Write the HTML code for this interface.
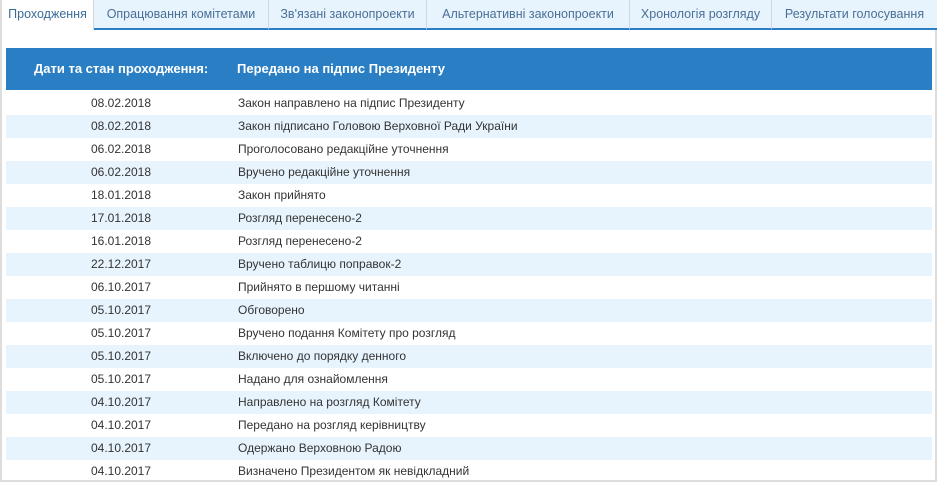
<!DOCTYPE html>
<html><head><meta charset="utf-8"><style>
*{margin:0;padding:0;box-sizing:border-box}
body{width:939px;height:489px;background:#fff;font-family:"Liberation Sans",Arial,sans-serif;position:relative;overflow:hidden}
.frame{position:absolute;left:0;top:0;width:937px;height:482px;border-left:2px solid #ddd;border-right:2px solid #ddd;border-bottom:2px solid #ddd}
.tabs{position:absolute;left:0;top:0;height:30px;width:937px}
.tab{position:absolute;top:0;height:30px;background:#e8f4fd;border-right:1px solid #d0d7de;border-bottom:2px solid #2a7fc4;color:#4a6f97;font-size:12.5px;text-align:center;line-height:28px}
.tab.act{background:#fff;border-bottom:none;color:#3a6d9a}
.hdr{position:absolute;left:6px;top:48px;width:926px;height:42px;background:#2a7fc4;color:#fff;font-weight:bold;font-size:13px;line-height:42px}
.row{position:absolute;left:6px;width:926px;height:23px;font-size:12px;color:#333;line-height:23px}
.row.s{background:#e8f4fd}
.d{position:absolute;left:0;width:230px;text-align:center}
.t{position:absolute;left:232px}
</style></head><body>
<div class="frame"></div>
<div class="tabs">
<div class="tab act" style="left:2px;width:92px">Проходження</div>
<div class="tab" style="left:94px;width:175px">Опрацювання комітетами</div>
<div class="tab" style="left:269px;width:158px">Зв'язані законопроекти</div>
<div class="tab" style="left:427px;width:203px">Альтернативні законопроекти</div>
<div class="tab" style="left:630px;width:142px">Хронологія розгляду</div>
<div class="tab" style="left:772px;width:165px;border-right:none">Результати голосування</div>
</div>
<div class="hdr"><span style="position:absolute;left:28px">Дати та стан проходження:</span><span style="position:absolute;left:231px">Передано на підпис Президенту</span></div>
<div class="row" style="top:92px"><span class="d">08.02.2018</span><span class="t">Закон направлено на підпис Президенту</span></div>
<div class="row s" style="top:115px"><span class="d">08.02.2018</span><span class="t">Закон підписано Головою Верховної Ради України</span></div>
<div class="row" style="top:138px"><span class="d">06.02.2018</span><span class="t">Проголосовано редакційне уточнення</span></div>
<div class="row s" style="top:161px"><span class="d">06.02.2018</span><span class="t">Вручено редакційне уточнення</span></div>
<div class="row" style="top:184px"><span class="d">18.01.2018</span><span class="t">Закон прийнято</span></div>
<div class="row s" style="top:207px"><span class="d">17.01.2018</span><span class="t">Розгляд перенесено-2</span></div>
<div class="row" style="top:230px"><span class="d">16.01.2018</span><span class="t">Розгляд перенесено-2</span></div>
<div class="row s" style="top:253px"><span class="d">22.12.2017</span><span class="t">Вручено таблицю поправок-2</span></div>
<div class="row" style="top:276px"><span class="d">06.10.2017</span><span class="t">Прийнято в першому читанні</span></div>
<div class="row s" style="top:299px"><span class="d">05.10.2017</span><span class="t">Обговорено</span></div>
<div class="row" style="top:322px"><span class="d">05.10.2017</span><span class="t">Вручено подання Комітету про розгляд</span></div>
<div class="row s" style="top:345px"><span class="d">05.10.2017</span><span class="t">Включено до порядку денного</span></div>
<div class="row" style="top:368px"><span class="d">05.10.2017</span><span class="t">Надано для ознайомлення</span></div>
<div class="row s" style="top:391px"><span class="d">04.10.2017</span><span class="t">Направлено на розгляд Комітету</span></div>
<div class="row" style="top:414px"><span class="d">04.10.2017</span><span class="t">Передано на розгляд керівництву</span></div>
<div class="row s" style="top:437px"><span class="d">04.10.2017</span><span class="t">Одержано Верховною Радою</span></div>
<div class="row" style="top:460px"><span class="d">04.10.2017</span><span class="t">Визначено Президентом як невідкладний</span></div>
</body></html>
